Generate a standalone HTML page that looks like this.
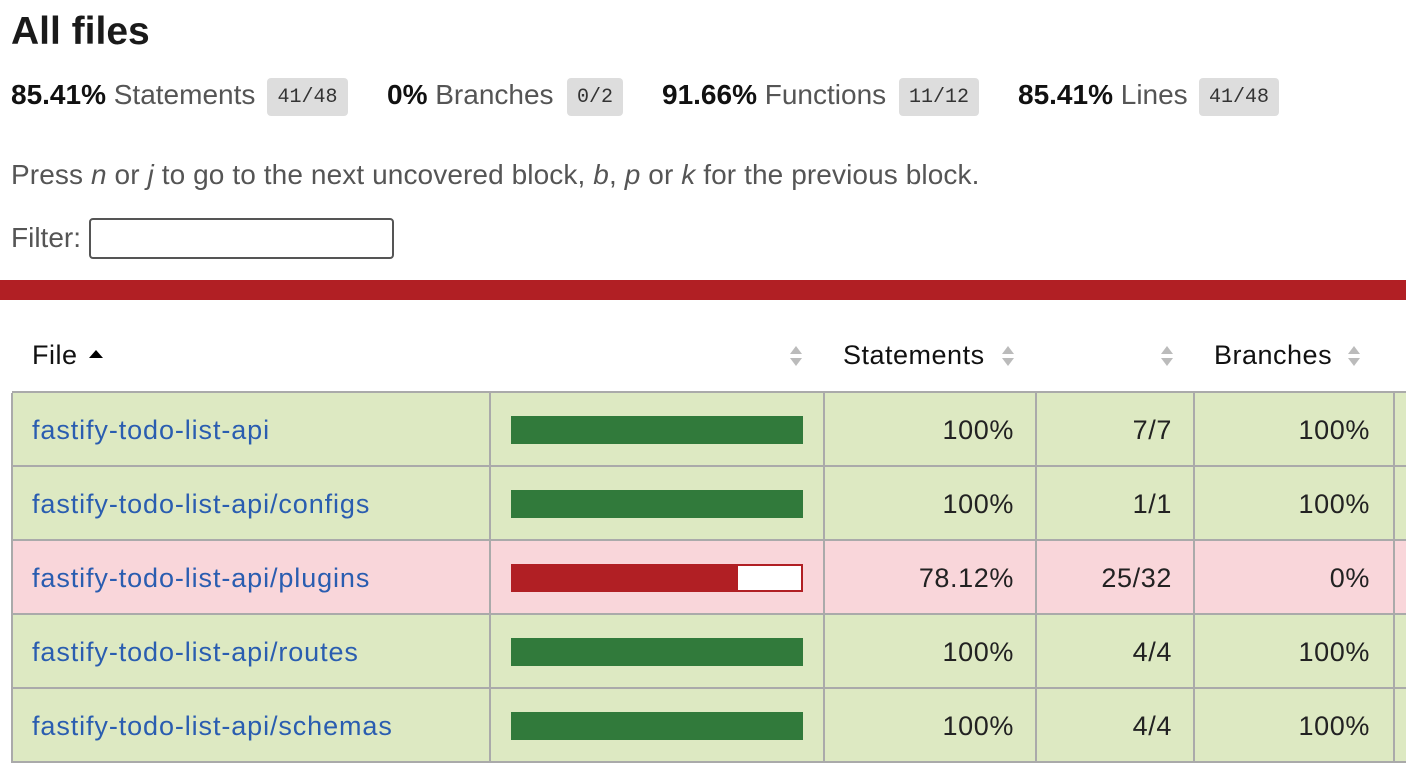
<!DOCTYPE html>
<html><head><meta charset="utf-8"><style>
body{margin:0;width:1406px;height:775px;overflow:hidden;background:#fff;font-family:"Liberation Sans",Arial,sans-serif;color:#222;position:relative}
.a{position:absolute;white-space:nowrap}
.badge{position:absolute;background:#ddd;border-radius:4px;font-family:"Liberation Mono",monospace;font-size:20px;color:#333;height:38px;line-height:40px;text-align:center;top:78px}
.st{font-size:28px;top:79px;color:#555}
.st b{color:#111}
.sort{position:absolute;width:14px;height:22px}
.row{position:absolute;left:12px;width:1394px;height:74px;border-bottom:2px solid #aaa;box-sizing:border-box}
.g{background:#dde9c2}.r{background:#f9d6da}
.vl{position:absolute;top:393px;height:370px;width:2px;background:#aaa}
.cell{position:absolute;font-size:27px;line-height:74px;letter-spacing:0.6px}
.lk{color:#2a5db0;left:20px;letter-spacing:0.9px}
.bar{position:absolute;left:499px;top:23px;width:292px;height:28px;box-sizing:border-box}
.h{font-size:27px;color:#111;top:340px;letter-spacing:0.5px}
</style></head><body>
<div class="a" style="left:11px;top:10px;font-size:39px;font-weight:bold;color:#1a1a1a">All files</div>

<div class="a st" style="left:11px"><b>85.41%</b> Statements</div>
<div class="badge" style="left:267px;width:81px">41/48</div>
<div class="a st" style="left:387px"><b>0%</b> Branches</div>
<div class="badge" style="left:567px;width:56px">0/2</div>
<div class="a st" style="left:662px"><b>91.66%</b> Functions</div>
<div class="badge" style="left:899px;width:80px">11/12</div>
<div class="a st" style="left:1018px"><b>85.41%</b> Lines</div>
<div class="badge" style="left:1199px;width:80px">41/48</div>

<div class="a" style="left:11px;top:159px;font-size:28px;letter-spacing:0.1px;color:#555">Press <i>n</i> or <i>j</i> to go to the next uncovered block, <i>b</i>, <i>p</i> or <i>k</i> for the previous block.</div>
<div class="a" style="left:11px;top:222px;font-size:28px;color:#555">Filter:</div>
<div class="a" style="left:89px;top:218px;width:305px;height:41px;border:2px solid #555;border-radius:4px;box-sizing:border-box"></div>

<div class="a" style="left:0;top:280px;width:1406px;height:20px;background:#b11f24"></div>

<div class="a h" style="left:32px">File</div>
<svg class="a" style="left:88px;top:349px" width="16" height="10"><path d="M1 9 L8 1 L15 9Z" fill="#000"/></svg>
<div class="a h" style="left:843px">Statements</div>
<div class="a h" style="left:1214px">Branches</div>
<svg class="sort" style="left:789px;top:345px"><path d="M1 9 L7 1 L13 9Z M1 13 L7 21 L13 13Z" fill="#bbb"/></svg>
<svg class="sort" style="left:1001px;top:345px"><path d="M1 9 L7 1 L13 9Z M1 13 L7 21 L13 13Z" fill="#bbb"/></svg>
<svg class="sort" style="left:1160px;top:345px"><path d="M1 9 L7 1 L13 9Z M1 13 L7 21 L13 13Z" fill="#bbb"/></svg>
<svg class="sort" style="left:1347px;top:345px"><path d="M1 9 L7 1 L13 9Z M1 13 L7 21 L13 13Z" fill="#bbb"/></svg>

<div class="a" style="left:12px;top:391px;width:1394px;height:2px;background:#aaa"></div>

<div class="row g" style="top:393px"><div class="cell lk">fastify-todo-list-api</div><div class="bar" style="background:#317a3b"></div><div class="cell" style="right:392px">100%</div><div class="cell" style="right:234px">7/7</div><div class="cell" style="right:36px">100%</div></div>
<div class="row g" style="top:467px"><div class="cell lk">fastify-todo-list-api/configs</div><div class="bar" style="background:#317a3b"></div><div class="cell" style="right:392px">100%</div><div class="cell" style="right:234px">1/1</div><div class="cell" style="right:36px">100%</div></div>
<div class="row r" style="top:541px"><div class="cell lk">fastify-todo-list-api/plugins</div><div class="bar" style="background:#fff;border:2px solid #b11f24"><div style="width:225px;height:100%;background:#b11f24"></div></div><div class="cell" style="right:392px">78.12%</div><div class="cell" style="right:234px">25/32</div><div class="cell" style="right:36px">0%</div></div>
<div class="row g" style="top:615px"><div class="cell lk">fastify-todo-list-api/routes</div><div class="bar" style="background:#317a3b"></div><div class="cell" style="right:392px">100%</div><div class="cell" style="right:234px">4/4</div><div class="cell" style="right:36px">100%</div></div>
<div class="row g" style="top:689px"><div class="cell lk">fastify-todo-list-api/schemas</div><div class="bar" style="background:#317a3b"></div><div class="cell" style="right:392px">100%</div><div class="cell" style="right:234px">4/4</div><div class="cell" style="right:36px">100%</div></div>

<div class="vl" style="left:11px"></div>
<div class="vl" style="left:489px"></div>
<div class="vl" style="left:823px"></div>
<div class="vl" style="left:1035px"></div>
<div class="vl" style="left:1193px"></div>
<div class="vl" style="left:1393px"></div>
</body></html>
